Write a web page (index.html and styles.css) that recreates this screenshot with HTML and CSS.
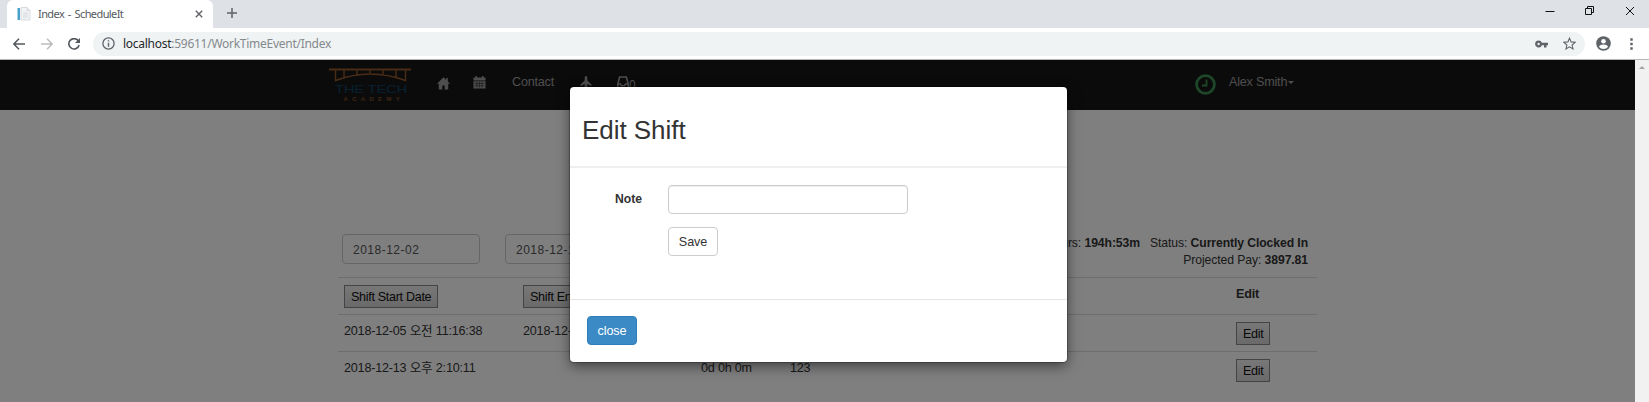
FILE: index.html
```html
<!DOCTYPE html>
<html lang="ko">
<head>
<meta charset="utf-8">
<title>Index - ScheduleIt</title>
<link rel="stylesheet" href="styles.css">
</head>
<body>
<div class="window">
  <header class="tabstrip">
    <div class="tab">
      <svg class="favicon" width="14" height="14" viewBox="0 0 14 14"><path d="M4 .5h6l3 3V13H4z" fill="#f1f3f5" stroke="#ced2d8" stroke-width=".8"/><path d="M10 .5v3h3M6 6h5M6 8h5M6 10h5" fill="none" stroke="#ced2d8" stroke-width=".8"/><path d="M.5 1H3v12H.5z" fill="#4aa0cc"/></svg>
      <span class="tab-title">Index - ScheduleIt</span>
      <svg class="tab-close" width="8" height="8" viewBox="0 0 8 8"><path d="M.8.8l6.400 6.400M7.200.8L.8 7.200" stroke="#5f6368" stroke-width="1.400"/></svg>
    </div>
    <svg class="plus" width="10" height="10" viewBox="0 0 10 10"><path d="M5 0v10M0 5h10" stroke="#5f6368" stroke-width="1.500"/></svg>
    <div class="winbtns">
      <svg width="10" height="10" viewBox="0 0 10 10"><path d="M.5 5.500h9" stroke="#111"/></svg>
      <svg width="10" height="10" viewBox="0 0 10 10"><path d="M.5 2.500h6v6h-6zM2.500 2.500v-2h6v6h-2" fill="none" stroke="#111"/></svg>
      <svg width="10" height="10" viewBox="0 0 10 10"><path d="M1 1l8 8M9 1L1 9" stroke="#111"/></svg>
    </div>
  </header>
  <div class="toolbar">
    <svg class="back" width="12" height="12" viewBox="0 0 12 12"><path d="M12 6H1M6 .8L.9 6 6 11.200" fill="none" stroke="#55595e" stroke-width="1.500"/></svg>
    <svg class="fwd" width="12" height="12" viewBox="0 0 12 12"><path d="M0 6h11M6 .8L11.100 6 6 11.200" fill="none" stroke="#babcbe" stroke-width="1.500"/></svg>
    <svg class="reload" width="12" height="12" viewBox="0 0 12 12"><path d="M10.300 2.800A5.200 5.200 0 1 0 11.100 7" fill="none" stroke="#55595e" stroke-width="1.600"/><path d="M12 0v5H7z" fill="#55595e"/></svg>
    <div class="omnibox">
      <svg width="13" height="13" viewBox="0 0 13 13"><circle cx="6.500" cy="6.500" r="5.600" fill="none" stroke="#5f6368" stroke-width="1.300"/><path d="M6.500 5.700v4M6.500 3.200v1.400" stroke="#5f6368" stroke-width="1.400"/></svg>
      <span class="url"><b>localhost</b>:59611/WorkTimeEvent/Index</span>
      <svg class="key" width="13" height="8" viewBox="0 0 13 8"><path d="M3.600.5a3.500 3.500 0 1 0 3.300 4.700H9v2.300h2.500V5.200H13V2.800H6.900A3.500 3.500 0 0 0 3.600.5zm0 2.300a1.200 1.200 0 1 1 0 2.400 1.200 1.200 0 0 1 0-2.400z" fill="#5f6368" fill-rule="evenodd"/></svg>
      <svg class="star" width="13" height="13" viewBox="0 0 13 13"><path d="M6.500 1.200l1.600 3.700 4 .4-3 2.700.9 3.900-3.500-2.100L3 11.900 3.900 8l-3-2.700 4-.4z" fill="none" stroke="#5f6368" stroke-width="1.100"/></svg>
    </div>
    <svg class="avatar" width="15" height="15" viewBox="0 0 15 15"><circle cx="7.500" cy="7.500" r="7.300" fill="#5f6368"/><circle cx="7.500" cy="5.300" r="2.300" fill="#fff"/><path d="M3 10.700c1-2.900 8-2.900 9 0-2 3-7 3-9 0z" fill="#fff"/></svg>
    <svg class="dots" width="3" height="12" viewBox="0 0 3 12"><path d="M.3.300h2.400v2.400H.3zM.3 4.800h2.400v2.400H.3zM.3 9.300h2.400v2.400H.3z" fill="#5f6368"/></svg>
  </div>

  <div class="viewport">
    <main class="page">
      <nav class="navbar">
        <svg class="logo" width="82" height="34" viewBox="0 0 82 34">
          <path d="M0 1.500h82" stroke="#94592c" stroke-width="1.800"/>
          <path d="M6.500 2v10.500Q41-.5 76.500 12.500V2M15 2v7.500M28 2v5M41 2v4M54 2v5M67 2v7.500" fill="none" stroke="#94592c" stroke-width="1.400"/>
          <text class="logo-a" x="6" y="25" textLength="72" lengthAdjust="spacingAndGlyphs">THE TECH</text>
          <text class="logo-b" x="14.500" y="32.500" textLength="56">ACADEMY</text>
        </svg>
        <svg class="home" width="13" height="13" viewBox="0 0 13 13"><path d="M6.500.3L0 6.800h1.800V12.500h3.500V8.500h2.400v4h3.500V6.800H13L10.800 4.600V1H9.200v2z" fill="#9d9d9d"/></svg>
        <svg class="cal" width="13" height="13" viewBox="0 0 13 13"><path d="M.5 1.500h12v3H.5zM2.500 0h1.500v2H2.500zM9 0h1.500v2H9zM.5 5.300h12v7.200H.5z" fill="#9d9d9d"/><path d="M1.500 7.500h10M1.500 9.800h10M4 5.500v6M6.500 5.500v6M9 5.500v6" stroke="#171717" stroke-width=".5"/></svg>
        <span class="contact">Contact</span>
        <svg class="plane" width="12" height="13" viewBox="0 0 12 13"><path d="M6 0c1 0 1.300 1 1.300 2v2.500L11.500 8.500v1.800L7.300 8v3l1.500 2H3.200l1.500-2V8L.5 10.300V8.500l4.200-4V2C4.700 1 5 0 6 0z" fill="#9d9d9d"/></svg>
        <span class="inbox"><svg width="12" height="13" viewBox="0 0 12 13"><path d="M2.600 1h6.800L11.200 8v4H.8V8zM1 8h2.500l1 1.800h3l1-1.800H11" fill="none" stroke="#9d9d9d" stroke-width="1.600"/></svg>0</span>
        <svg class="clock" width="21" height="21" viewBox="0 0 21 21"><circle cx="10.500" cy="10.500" r="8.900" fill="none" stroke="#3d8f52" stroke-width="2.800"/><path d="M11.500 5.500v6H7" fill="none" stroke="#3d8f52" stroke-width="1.800"/></svg>
        <span class="user">Alex Smith</span><i class="caret"></i>
      </nav>
      <section class="content">
        <div class="filters">
          <div class="date">2018-12-02</div>
          <div class="date">2018-12-15</div>
          <div class="summary">
            <div>Total Hours: <b>194h:53m</b><span class="status">Status: <b>Currently Clocked In</b></span></div>
            <div>Projected Pay: <b>3897.81</b></div>
          </div>
        </div>
        <div class="row head">
          <span><button class="sort">Shift Start Date</button></span><span><button>Shift End Date</button></span><span></span><span></span><b>Edit</b>
        </div>
        <div class="row">
          <span>2018-12-05 오전 11:16:38</span><span>2018-12-05</span><span></span><span></span><span><button>Edit</button></span>
        </div>
        <div class="row">
          <span>2018-12-13 오후 2:10:11</span><span></span><span>0d 0h 0m</span><span>123</span><span><button>Edit</button></span>
        </div>
      </section>
    </main>
    <aside class="scrollbar"><i></i></aside>
    <div class="overlay"></div>
    <div class="modal">
      <h2>Edit Shift</h2>
      <div class="modal-body">
        <label>Note</label>
        <div class="fields"><div class="input"></div><div class="save">Save</div></div>
      </div>
      <div class="modal-footer"><div class="close">close</div></div>
    </div>
  </div>
</div>
</body>
</html>
```
FILE: styles.css
```css
* { box-sizing: border-box; }
body { margin: 0; font: 12.6px/18px "Liberation Sans", "Noto Sans CJK KR", sans-serif; color: #333; }
svg { display: block; flex: none; }
.window { width: 1649px; height: 402px; overflow: hidden; display: flex; flex-direction: column; }

.tabstrip { height: 28px; flex: none; background: #dee1e6; display: flex; align-items: flex-start; padding-left: 7px; }
.tab { width: 206px; height: 28px; background: #fff; border-radius: 6px 6px 0 0; display: flex; align-items: center; padding: 0 10px; font: 11px/26px "Noto Sans", sans-serif; color: #55595e; }
.tab-title { margin-left: 7px; flex: 1; white-space: nowrap; letter-spacing: -.6px; word-spacing: 1.500px; }
.plus { margin: 8px 0 0 14px; }
.winbtns { margin: 6px 14px 0 auto; display: flex; gap: 30px; }

.toolbar { height: 32px; flex: none; background: #fff; border-bottom: 1px solid #b6b6b6; display: flex; align-items: center; padding-left: 13px; }
.fwd { margin-left: 16px; }
.reload { margin-left: 15px; }
.omnibox { margin-left: 13px; width: 1492px; height: 24px; border-radius: 12px; background: #eff3f4; display: flex; align-items: center; padding: 0 9px; }
.url { margin-left: 8px; flex: 1; font: 12px/22px "Noto Sans", sans-serif; letter-spacing: -.27px; color: #85898d; }
.url b { font-weight: 400; color: #26282a; }
.key { margin-right: 15px; }
.avatar { margin-left: 11px; }
.dots { margin-left: 19px; }

.viewport { position: relative; flex: 1; display: flex; }
.page { width: 1635px; background: #fff; }
.scrollbar { width: 14px; background: #f1f1f1; padding: 6px 4px; }
.scrollbar i { display: block; border: 3px solid transparent; border-top: 0; border-bottom: 3px solid #a3a3a3; }
.overlay { position: absolute; inset: 0 14px 0 0; background: rgba(0,0,0,.5); }

.navbar { height: 50px; background: #171717; color: #9d9d9d; display: flex; align-items: flex-start; padding: 8px 0 0 329px; letter-spacing: -.2px; }
.logo-a { font: 11px "Liberation Sans", sans-serif; fill: #0f4263; }
.logo-b { font: 700 6px "Liberation Sans", sans-serif; fill: #7d4b28; }
.home { margin: 9px 0 0 26px; }
.cal { margin: 8px 0 0 23px; }
.contact { margin: 5px 0 0 26px; width: 43px; }
.plane { margin: 8px 0 0 25px; }
.inbox { margin: 8px 0 0 25px; width: 19px; display: flex; line-height: 18px; font-size: 12px; }
.clock { margin: 6px 0 0 559px; }
.user { margin: 5px 0 0 13px; width: 58px; white-space: nowrap; }
.caret { margin: 13px 0 0 1px; border: 3.500px solid transparent; border-top-color: #9d9d9d; border-bottom: 0; }

.content { margin-left: 338px; width: 979px; }
.filters { height: 167px; padding: 124px 9px 0 4px; display: flex; }
.date { width: 138px; height: 30px; margin-right: 25px; border: 1px solid #ccc; border-radius: 4px; padding: 6px 11px 4px 10px; font-size: 12px; letter-spacing: .5px; color: #555; white-space: nowrap; }
.summary { margin-left: auto; padding-top: 1px; text-align: right; font-size: 12.200px; line-height: 17px; letter-spacing: -.09px; }
.status { margin-left: 10px; }
.row { height: 37px; border-top: 1px solid #ddd; padding: 7px 6px 0; display: grid; grid-template-columns: 179px 178px 89px 446px 1fr; white-space: nowrap; letter-spacing: -.2px; }
button { display: block; height: 23px; padding: 0 6px; border: 1px solid #888; background: linear-gradient(#f0f0f0, #d4d4d4); font: 12.6px "Liberation Sans", sans-serif; letter-spacing: -.32px; color: #111; }

.modal { position: absolute; left: 570px; top: 27px; width: 497px; height: 275px; background: #fff; border-radius: 4px; box-shadow: 0 4px 13px rgba(0,0,0,.5), 0 0 1px 1px rgba(0,0,0,.25); }
h2 { margin: 0; height: 81px; padding: 27px 12px 0; border-bottom: 2px solid #efefef; font-size: 26px; line-height: 32px; font-weight: 400; letter-spacing: -.05px; }
.modal-body { height: 131px; padding-top: 17px; display: flex; }
label { width: 72px; padding-top: 5px; text-align: right; font-weight: 700; font-size: 12.200px; }
.fields { margin-left: 26px; }
.input { width: 240px; height: 29px; border: 1px solid #ccc; border-radius: 4px; box-shadow: inset 0 1px 1px rgba(0,0,0,.07); }
.save, .close { width: 50px; height: 29px; border: 1px solid #ccc; border-radius: 4px; line-height: 28px; text-align: center; letter-spacing: -.1px; }
.save { margin-top: 13px; }
.modal-footer { border-top: 1px solid #e5e5e5; padding: 16px 17px; }
.close { background: #3b8ac5; border-color: #2e7eba; color: #fff; }
```
